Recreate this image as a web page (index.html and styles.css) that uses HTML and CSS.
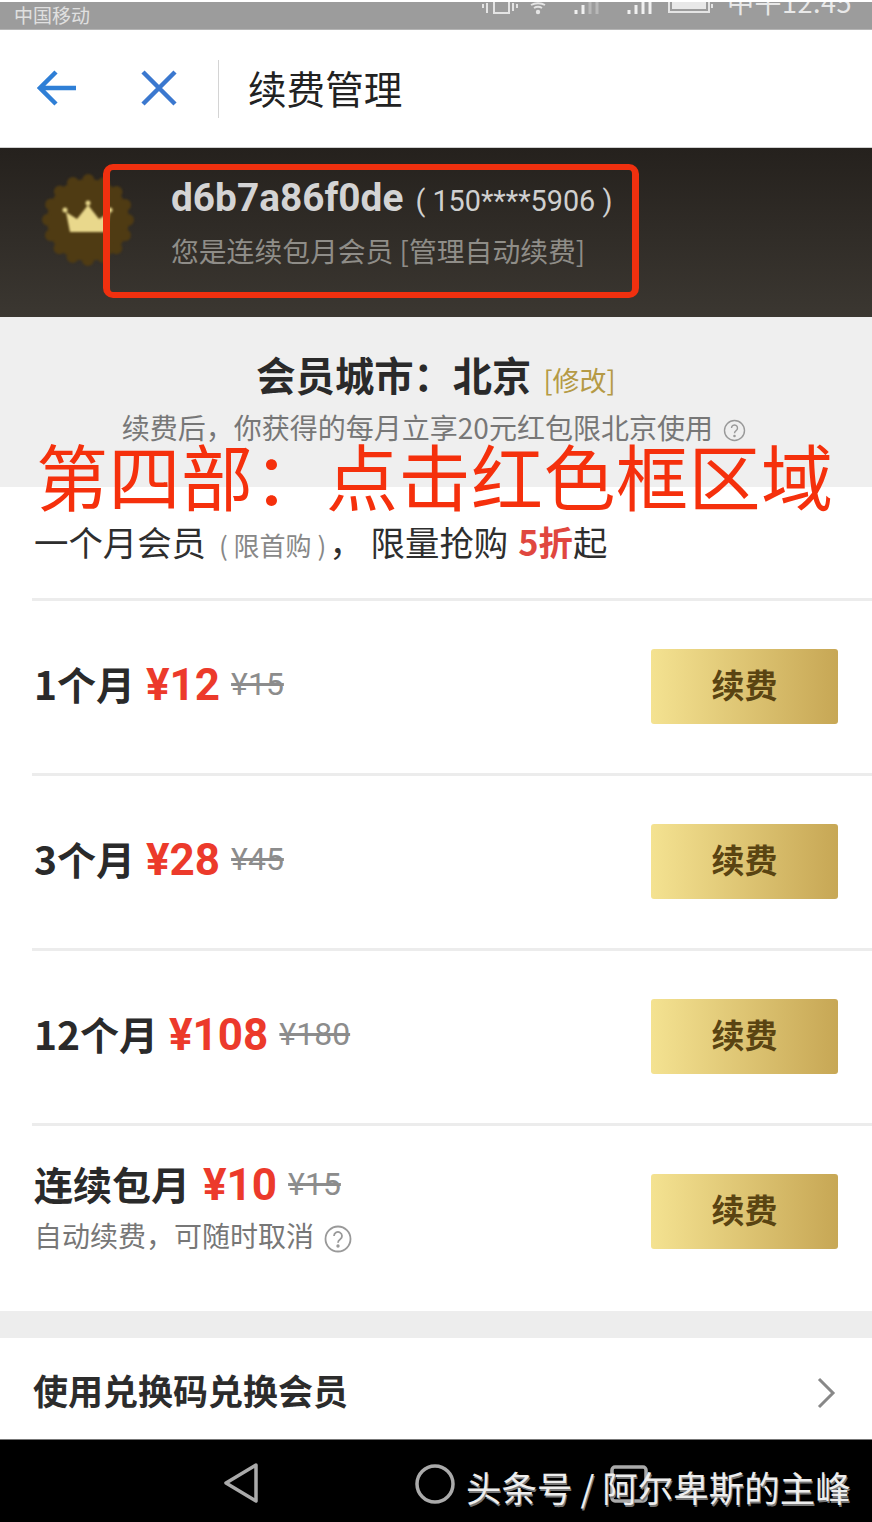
FILE: index.html
```html
<!DOCTYPE html>
<html lang="zh">
<head>
<meta charset="utf-8">
<title>续费管理</title>
<link rel="stylesheet" href="styles.css">
</head>
<body>
<div class="page">
  <div class="status">
    <span class="carrier">中国移动</span>
    <div class="status-right">
      <svg class="st-icons" width="240" height="16" viewBox="0 0 240 16" fill="none" stroke="#e4e4e4" stroke-width="2">
        <path d="M3 2v4M7 1v10M29 0v11h-15V0M33 1v8M37 2v4"/>
        <path d="M51 3a10 6 0 0 1 14 0M54 6a6 4 0 0 1 8 0"/>
        <circle cx="58" cy="10" r="2.2" fill="#e4e4e4" stroke="none"/>
        <path d="M96 12V8M103 12V3" stroke="#f0f0f0" stroke-width="3"/>
        <path d="M110 12V0M117 12V0" stroke="#b8b8b8" stroke-width="3"/>
        <path d="M149 12V8M156 12V3M163 12V0M170 12V0" stroke="#f0f0f0" stroke-width="3"/>
        <path d="M189 0v10h40V0" stroke-width="2"/>
        <path d="M192 0h34v7h-34z" fill="#e8e8e8" stroke="none"/>
        <path d="M232 2v4" stroke-width="2"/>
      </svg>
      <span class="clock">中午12:45</span>
    </div>
  </div>

  <header class="nav">
    <svg class="nav-back" width="40" height="36" viewBox="0 0 40 36" fill="none" stroke="#2f7fd6" stroke-width="4.5">
      <path d="M19 2L3 18l16 16M3 18h36"/>
    </svg>
    <svg class="nav-close" width="36" height="36" viewBox="0 0 36 36" fill="none" stroke="#3b78cf" stroke-width="4.5">
      <path d="M2 2l32 32M34 2L2 34"/>
    </svg>
    <h1 class="nav-title">续费管理</h1>
  </header>

  <section class="account">
    <div class="badge">
      <svg width="96" height="98" viewBox="0 0 96 98">
        <circle cx="48" cy="48" r="41" fill="#4f3b13"/>
        <circle cx="48" cy="48" r="40" fill="none" stroke="#4f3b13" stroke-width="12" stroke-linecap="round" stroke-dasharray="0 15.708"/>
        <path fill="#e9d88c" d="M30 60L26 40l11 7 11-14 11 14 11-7-4 20z"/>
        <circle cx="25" cy="38" r="2.5" fill="#e9d88c"/>
        <circle cx="48" cy="31" r="2.5" fill="#e9d88c"/>
        <circle cx="70" cy="38" r="2.5" fill="#e9d88c"/>
      </svg>
    </div>
    <div class="account-info">
      <div class="account-name"><b class="username">d6b7a86f0de</b><span class="phone">( 150****5906 )</span></div>
      <div class="account-sub">您是连续包月会员 [管理自动续费]</div>
    </div>
    <div class="red-box"></div>
  </section>

  <section class="city">
    <div class="city-line"><b class="city-name">会员城市：北京</b><span class="city-edit">[修改]</span></div>
    <div class="city-note">续费后，你获得的每月立享20元红包限北京使用
      <svg class="help" width="23" height="23" viewBox="0 0 23 23" fill="none" stroke="#999" stroke-width="1.4"><circle cx="11.5" cy="11.5" r="10"/><path d="M8.5 9a3 3 0 1 1 4.6 2.6c-1.1.7-1.6 1.3-1.6 2.6"/><circle cx="11.5" cy="17" r=".6"/></svg>
    </div>
  </section>

  <section class="plans">
    <div class="plans-head">一个月会员<span class="limit">( 限首购 )</span><span class="comma">，</span>限量抢购<b class="off">5折</b>起</div>

    <div class="plan">
      <div class="plan-text"><div class="plan-line"><b class="plan-name">1个月</b><b class="price">¥12</b><s class="old">¥15</s></div></div>
      <button class="renew">续费</button>
    </div>
    <div class="plan">
      <div class="plan-text"><div class="plan-line"><b class="plan-name">3个月</b><b class="price">¥28</b><s class="old">¥45</s></div></div>
      <button class="renew">续费</button>
    </div>
    <div class="plan">
      <div class="plan-text"><div class="plan-line"><b class="plan-name">12个月</b><b class="price">¥108</b><s class="old">¥180</s></div></div>
      <button class="renew">续费</button>
    </div>
    <div class="plan plan-auto">
      <div class="plan-text">
        <div class="plan-line"><b class="plan-name">连续包月</b><b class="price">¥10</b><s class="old">¥15</s></div>
        <div class="plan-note">自动续费，可随时取消<svg class="help" width="28" height="28" viewBox="0 0 28 28" fill="none" stroke="#999" stroke-width="1.8"><circle cx="14" cy="14" r="12.5"/><path d="M10 11a4 4 0 1 1 6.2 3.3c-1.5 1-2.2 1.7-2.2 3.4"/><circle cx="14" cy="21" r=".8"/></svg></div>
      </div>
      <button class="renew">续费</button>
    </div>
  </section>

  <a class="redeem">
    <b class="redeem-text">使用兑换码兑换会员</b>
    <svg class="redeem-arrow" width="20" height="32" viewBox="0 0 20 32" fill="none" stroke="#888" stroke-width="3"><path d="M3 2l14 14L3 30"/></svg>
  </a>

  <nav class="sysbar">
    <svg class="sys-back" width="38" height="42" viewBox="0 0 38 42" fill="none" stroke="#aaa" stroke-width="3.5"><path d="M34 3L4 21l30 18z" stroke-linejoin="round"/></svg>
    <svg class="sys-home" width="42" height="42" viewBox="0 0 42 42" fill="none" stroke="#aaa" stroke-width="3.5"><circle cx="21" cy="21" r="18"/></svg>
    <svg class="sys-recent" width="38" height="38" viewBox="0 0 38 38" fill="none" stroke="#aaa" stroke-width="3.5"><rect x="2" y="2" width="34" height="34" rx="3"/></svg>
    <span class="watermark">头条号 / 阿尔卑斯的主峰</span>
  </nav>

  <div class="overlay">第四部：点击红色框区域</div>
</div>
</body>
</html>
```

FILE: styles.css
```css
* { box-sizing: border-box; }
html, body { margin: 0; padding: 0; }
body {
  font-family: "Noto Sans CJK SC", "Liberation Sans", sans-serif;
  background: #fff;
  color: #2b2b2b;
}
.page {
  position: relative;
  width: 872px;
  height: 1522px;
  overflow: hidden;
  display: flex;
  flex-direction: column;
}

.status {
  flex: none;
  height: 28px;
  margin-top: 2px;
  background: #9c9c9c;
  display: flex;
  justify-content: space-between;
  padding: 0 20px 0 14px;
  overflow: hidden;
  border-bottom: 1px solid #b5b5b5;
}
.carrier {
  font-size: 19px;
  line-height: 24px;
  margin-top: 1px;
  color: #e0e0e0;
}
.status-right { display: flex; align-items: flex-start; }
.st-icons { margin-right: 7px; flex: none; }
.clock {
  font-size: 27px;
  line-height: 20px;
  margin-top: -10px;
  letter-spacing: 0.5px;
  color: #e8e8e8;
}

.nav {
  flex: none;
  height: 118px;
  display: flex;
  align-items: center;
  background: #fff;
  padding-left: 37px;
  border-bottom: 1px solid #d0d0d0;
}
.nav-back { flex: none; margin-top: -1px; }
.nav-close { flex: none; margin-left: 64px; margin-top: -1px; }
.nav-title {
  margin: 0 0 0 41px;
  padding-left: 29px;
  height: 58px;
  border-left: 1px solid #d4d4d4;
  font-size: 38.6px;
  line-height: 54px;
  font-weight: 400;
  color: #222;
}

.account {
  position: relative;
  flex: none;
  height: 169px;
  background: linear-gradient(#25211d, #3b3731);
  padding: 0 0 0 40px;
  display: flex;
}
.badge { flex: none; width: 96px; margin-top: 24px; height: 98px; filter: blur(0.8px); }
.account-info { margin-left: 35px; padding-top: 24px; }
.account-name { line-height: 52px; height: 52px; white-space: nowrap; }
.username {
  font-family: "Roboto", sans-serif;
  font-size: 38.8px;
  font-weight: 700;
  color: #d4d4d4;
}
.phone {
  font-family: "Roboto", sans-serif;
  font-size: 28.8px;
  color: #d0d0d0;
  margin-left: 12px;
}
.account-sub {
  margin-top: 4px;
  font-size: 27.8px;
  line-height: 44px;
  color: #8f8d88;
  white-space: nowrap;
}
.red-box {
  position: absolute;
  left: 103px;
  top: 16px;
  width: 536px;
  height: 134px;
  border-style: solid;
  border-color: #f0300f;
  border-width: 6px 7px;
  border-radius: 10px;
}

.city {
  flex: none;
  height: 170px;
  background: #efefef;
  text-align: center;
  padding-top: 27px;
}
.city-line { line-height: 60px; height: 60px; white-space: nowrap; }
.city-name { font-size: 39.3px; font-weight: 700; color: #2a2a2a; }
.city-edit { font-size: 27px; color: #b59a45; margin-left: 12px; }
.city-note {
  margin-top: 1px;
  font-size: 28px;
  line-height: 44px;
  color: #777;
  white-space: nowrap;
}
.help { vertical-align: -3px; margin-left: 4px; }
.city-note .help { margin-right: 4px; }

.plans { flex: none; padding-top: 27px; padding-left: 32px; }
.plans-head {
  height: 84px;
  padding: 0 0 0 2px;
  font-size: 34.4px;
  line-height: 54px;
  color: #2e2e2e;
  white-space: nowrap;
}
.limit { font-size: 26px; color: #888; margin-left: 13px; }
.comma { margin-left: 3px; margin-right: 7px; }
.off { color: #e0473f; font-weight: 700; margin-left: 10px; }

.plan {
  height: 175px;
  border-top: 3px solid #ececec;
  padding: 0 34px 0 2px;
  display: flex;
  align-items: center;
  justify-content: space-between;
}
.plan-auto { height: 188px; }
.plan-text { flex: none; margin-top: -2px; }
.plan-auto .plan-text { margin-top: 0; margin-bottom: 30px; }
.plan-line { display: flex; align-items: baseline; line-height: 60px; }
.plan-name { font-size: 39px; font-weight: 700; color: #2a2a2a; }
.price {
  font-family: "Roboto", sans-serif;
  font-size: 44px;
  font-weight: 700;
  color: #ec3a2b;
  margin-left: 11px;
}
.plan-auto .price { margin-left: 13px; }
.old {
  font-family: "Roboto", sans-serif;
  font-size: 32px;
  color: #8c8c8c;
  margin-left: 11px;
  position: relative;
  top: -5px;
}
.plan-note {
  margin-top: -4px;
  font-size: 28px;
  line-height: 40px;
  color: #777;
  white-space: nowrap;
}
.plan-note .help { vertical-align: -6px; margin-left: 10px; }
.renew {
  flex: none;
  width: 187px;
  height: 75px;
  border: 0;
  border-radius: 3px;
  background: linear-gradient(90deg, #f4e291, #c7a755);
  color: #5a4412;
  font-family: inherit;
  font-size: 33px;
  line-height: 71px;
  font-weight: 700;
  padding: 0 0 4px;
  margin-top: -1px;
}
.plan-auto .renew { margin-top: 0; margin-bottom: 15px; }

.redeem {
  flex: none;
  height: 128px;
  background: #fff;
  border-top: 27px solid #ededed;
  padding: 0 36px 0 33px;
  display: flex;
  align-items: center;
  justify-content: space-between;
}
.redeem-text { font-size: 35px; font-weight: 700; color: #2c2c2c; margin-top: 2px; }
.redeem-arrow { margin-top: 8px; }

.sysbar {
  flex: 1;
  position: relative;
  background: #000;
  border-top: 1px solid #777;
}
.sys-back { position: absolute; left: 222px; top: 22px; }
.sys-home { position: absolute; left: 414px; top: 23px; }
.sys-recent { position: absolute; left: 610px; top: 25px; }
.watermark {
  position: absolute;
  left: 466px;
  top: 21px;
  font-size: 35.5px;
  line-height: 52px;
  color: #eee;
  text-shadow: 1px 2px 0 #777;
  white-space: nowrap;
}

.overlay {
  position: absolute;
  left: 36px;
  top: 426px;
  font-size: 72px;
  letter-spacing: 0.5px;
  line-height: 96px;
  color: #f5300c;
  white-space: nowrap;
  font-weight: 400;
}
```
